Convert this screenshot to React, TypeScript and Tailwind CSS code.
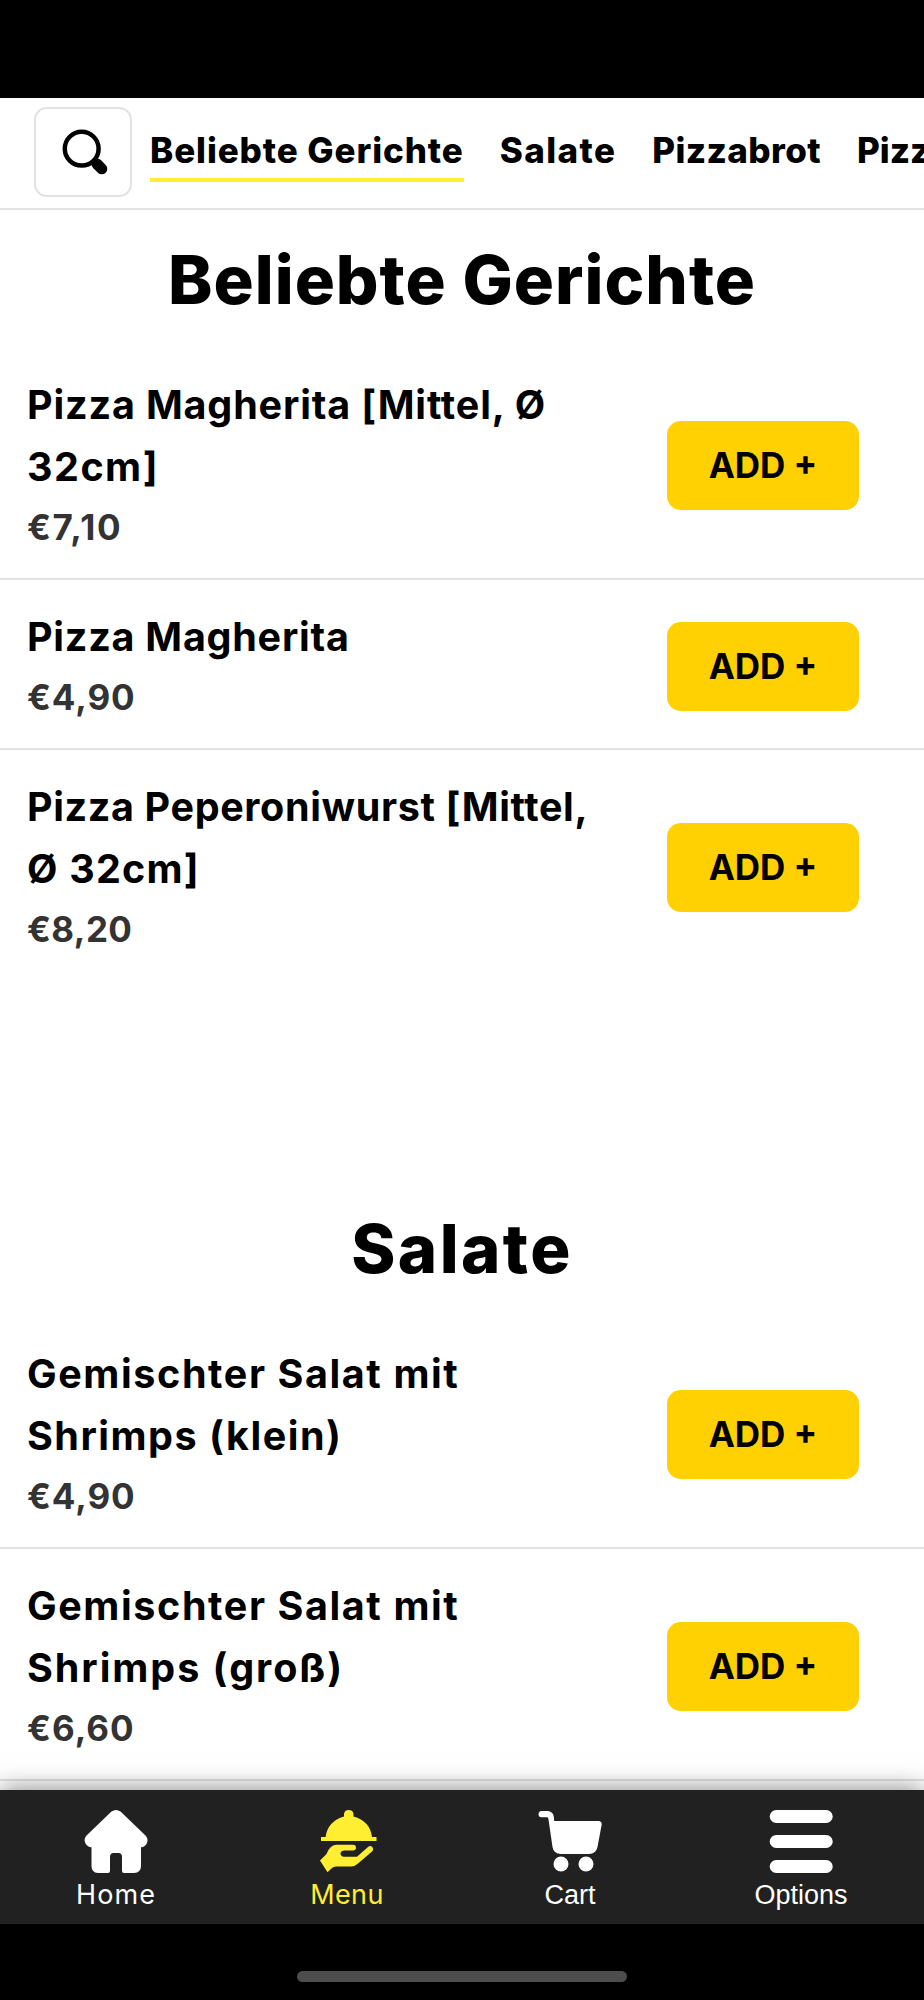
import React from 'react';

interface Line {
  text: string;
  tracking: string;
}

interface Dish {
  name: Line[];
  price: Line;
}

interface DishRowProps {
  dish: Dish;
  divider?: boolean;
}

interface TabItemProps {
  label: string;
  labelClass: string;
  iconClass?: string;
  children: React.ReactNode;
}

const categories: Line[] = [
  { text: 'Salate', tracking: 'tracking-[1.4px]' },
  { text: 'Pizzabrot', tracking: 'tracking-[0.4px]' },
  { text: 'Pizza', tracking: 'tracking-normal' },
];

const popular: Dish[] = [
  {
    name: [
      { text: 'Pizza Magherita [Mittel, Ø', tracking: 'tracking-[0.85px]' },
      { text: '32cm]', tracking: 'tracking-[1.5px]' },
    ],
    price: { text: '€7,10', tracking: 'tracking-[1.6px]' },
  },
  {
    name: [{ text: 'Pizza Magherita', tracking: 'tracking-[0.75px]' }],
    price: { text: '€4,90', tracking: 'tracking-[0.9px]' },
  },
  {
    name: [
      { text: 'Pizza Peperoniwurst [Mittel,', tracking: 'tracking-[0.63px]' },
      { text: 'Ø 32cm]', tracking: 'tracking-[1.2px]' },
    ],
    price: { text: '€8,20', tracking: 'tracking-[0.4px]' },
  },
];

const salads: Dish[] = [
  {
    name: [
      { text: 'Gemischter Salat mit', tracking: 'tracking-[1.6px]' },
      { text: 'Shrimps (klein)', tracking: 'tracking-[1.5px]' },
    ],
    price: { text: '€4,90', tracking: 'tracking-[0.9px]' },
  },
  {
    name: [
      { text: 'Gemischter Salat mit', tracking: 'tracking-[1.6px]' },
      { text: 'Shrimps (groß)', tracking: 'tracking-[1.95px]' },
    ],
    price: { text: '€6,60', tracking: 'tracking-[1px]' },
  },
];

const DishRow: React.FC<DishRowProps> = ({ dish, divider = true }) => (
  <div
    className={`flex items-center justify-between border-b-2 pt-[26px] pb-[22px] pl-[27px] pr-[65px] ${
      divider ? 'border-[#e2e2e2]' : 'border-transparent'
    }`}
  >
    <div>
      <h3 className="text-[39.5px] leading-[62px] font-bold whitespace-nowrap text-black">
        {dish.name.map((line) => (
          <span key={line.text} className={`block ${line.tracking}`}>
            {line.text}
          </span>
        ))}
      </h3>
      <p className={`py-px text-[35px] leading-[56px] font-bold text-[#333333] ${dish.price.tracking}`}>
        {dish.price.text}
      </p>
    </div>
    <button className="h-[89px] w-[192px] rounded-[14px] bg-[#ffd103] text-[35px] font-bold text-black">
      ADD +
    </button>
  </div>
);

const TabItem: React.FC<TabItemProps> = ({ label, labelClass, iconClass = '', children }) => (
  <div className="flex flex-col items-center">
    <svg viewBox="0 0 64 64" className={`h-16 w-16 ${iconClass}`} fill="currentColor">
      {children}
    </svg>
    <span className={`pt-[2px] leading-[40px] ${labelClass}`}>{label}</span>
  </div>
);

const App: React.FC = () => (
  <div className="flex h-[2000px] w-[924px] flex-col overflow-hidden bg-white font-['Inter',sans-serif]">
    {/* Status bar */}
    <div className="h-[98px] shrink-0 bg-black"></div>

    {/* Category bar */}
    <header className="flex h-[112px] shrink-0 items-start overflow-hidden border-b-2 border-[#e2e2e2] pl-[34px] pt-[9px]">
      <button className="flex h-[90px] w-[98px] shrink-0 items-center justify-center rounded-[13px] border-2 border-[#e2e2e2]">
        <svg viewBox="0 0 46 46" className="ml-[3px] h-[46px] w-[46px]" fill="none" stroke="#000">
          <circle cx="19.7" cy="19.7" r="16.9" strokeWidth="4.5" />
          <path d="M31 31L34 34" strokeWidth="9" />
          <path d="M35 35L39.8 39.8" strokeWidth="11" strokeLinecap="round" />
        </svg>
      </button>
      <nav className="ml-[18px] flex gap-9 pt-[16px] text-[35px] leading-[55px] font-extrabold whitespace-nowrap text-black">
        <span className="border-b-4 border-[#ffee32] tracking-[0.9px]">Beliebte Gerichte</span>
        {categories.map((category) => (
          <span key={category.text} className={category.tracking}>
            {category.text}
          </span>
        ))}
      </nav>
    </header>

    {/* Menu */}
    <main className="h-[1580px] shrink-0 overflow-hidden">
      <section className="h-[969px]">
        <h2 className="h-[138px] pt-[20px] text-center text-[67px] leading-[100px] font-extrabold tracking-[1px] text-black">
          Beliebte Gerichte
        </h2>
        {popular.map((dish, i) => (
          <DishRow key={i} dish={dish} divider={i < popular.length - 1} />
        ))}
      </section>
      <section>
        <h2 className="h-[138px] pt-[20px] text-center text-[67px] leading-[100px] font-extrabold tracking-[2.4px] text-black">
          Salate
        </h2>
        {salads.map((dish, i) => (
          <DishRow key={i} dish={dish} />
        ))}
      </section>
    </main>

    {/* Tab bar */}
    <footer className="relative flex h-[134px] shrink-0 bg-[#212121] pt-[19px] text-white shadow-[0_0_24px_rgba(0,0,0,0.5)]">
      <div className="flex w-[232px] justify-center">
        <TabItem label="Home" labelClass="text-[27px] tracking-[1.1px]">
          <path d="M27.5 2.5Q32 -0.5 36.5 2.5L61.5 26.5Q64.5 29.8 63 34Q61.3 38 57 38.3V57Q57 63.5 50 64H40Q38 64 38 62V48Q38 44 34.5 44H29.5Q26 44 26 48V62Q26 64 24 64H14Q7.5 63.5 7.5 57V38.3Q3 38 1.3 34Q-0.5 29.8 2.5 26.5Z" />
        </TabItem>
      </div>
      <div className="flex w-[230px] justify-center text-[#ffee32]">
        <TabItem label="Menu" labelClass="text-[27px] tracking-[0.4px]" iconClass="translate-x-[2px]">
          <path d="M27 7.5V5Q27.5 1 31.7 1Q36 1 36.5 5V7.5Q53 12 55 28H59.5V32H4V28H8.5Q11 12 27 7.5Z" />
          <path d="M3 51.5L9.5 45Q13 36 19 35.8H36Q39 36 39 38.7Q39 41.3 36 41.5H27Q23.5 42 23.5 44.5Q23.5 47.5 27 47.8H40L51 38Q53.5 36.2 55.3 38Q57 40.3 55 42.5L41 54.5Q38 57.5 34 57.5H19Q16.5 57.5 15 59L10.5 63.2Z" />
        </TabItem>
      </div>
      <div className="flex w-[216px] justify-center">
        <TabItem label="Cart" labelClass="font-['Liberation_Sans',sans-serif] text-[27px]">
          <path d="M3.5 2H10Q15.5 2.5 16 9L16.2 12H61Q64 12.5 63.7 15.5L59.5 38Q58 44.8 51 45H23Q15.5 44.8 14.5 38L10.5 10.5Q10.3 8.3 9 8.3H3.5Q0.5 8 0.5 5.2Q0.5 2.3 3.5 2Z" />
          <circle cx="23" cy="55" r="7.5" />
          <circle cx="48" cy="55" r="7.5" />
        </TabItem>
      </div>
      <div className="flex w-[246px] justify-center">
        <TabItem label="Options" labelClass="font-['Liberation_Sans',sans-serif] text-[27px]">
          <rect x="0.7" y="1" width="63" height="13" rx="6.5" />
          <rect x="0.7" y="26" width="63" height="13" rx="6.5" />
          <rect x="0.7" y="51" width="63" height="13" rx="6.5" />
        </TabItem>
      </div>
    </footer>

    {/* Home indicator */}
    <div className="relative flex grow justify-center bg-black pt-[47px]">
      <div className="h-[11px] w-[330px] rounded-full bg-[#4d4d4d]"></div>
    </div>
  </div>
);

export default App;
